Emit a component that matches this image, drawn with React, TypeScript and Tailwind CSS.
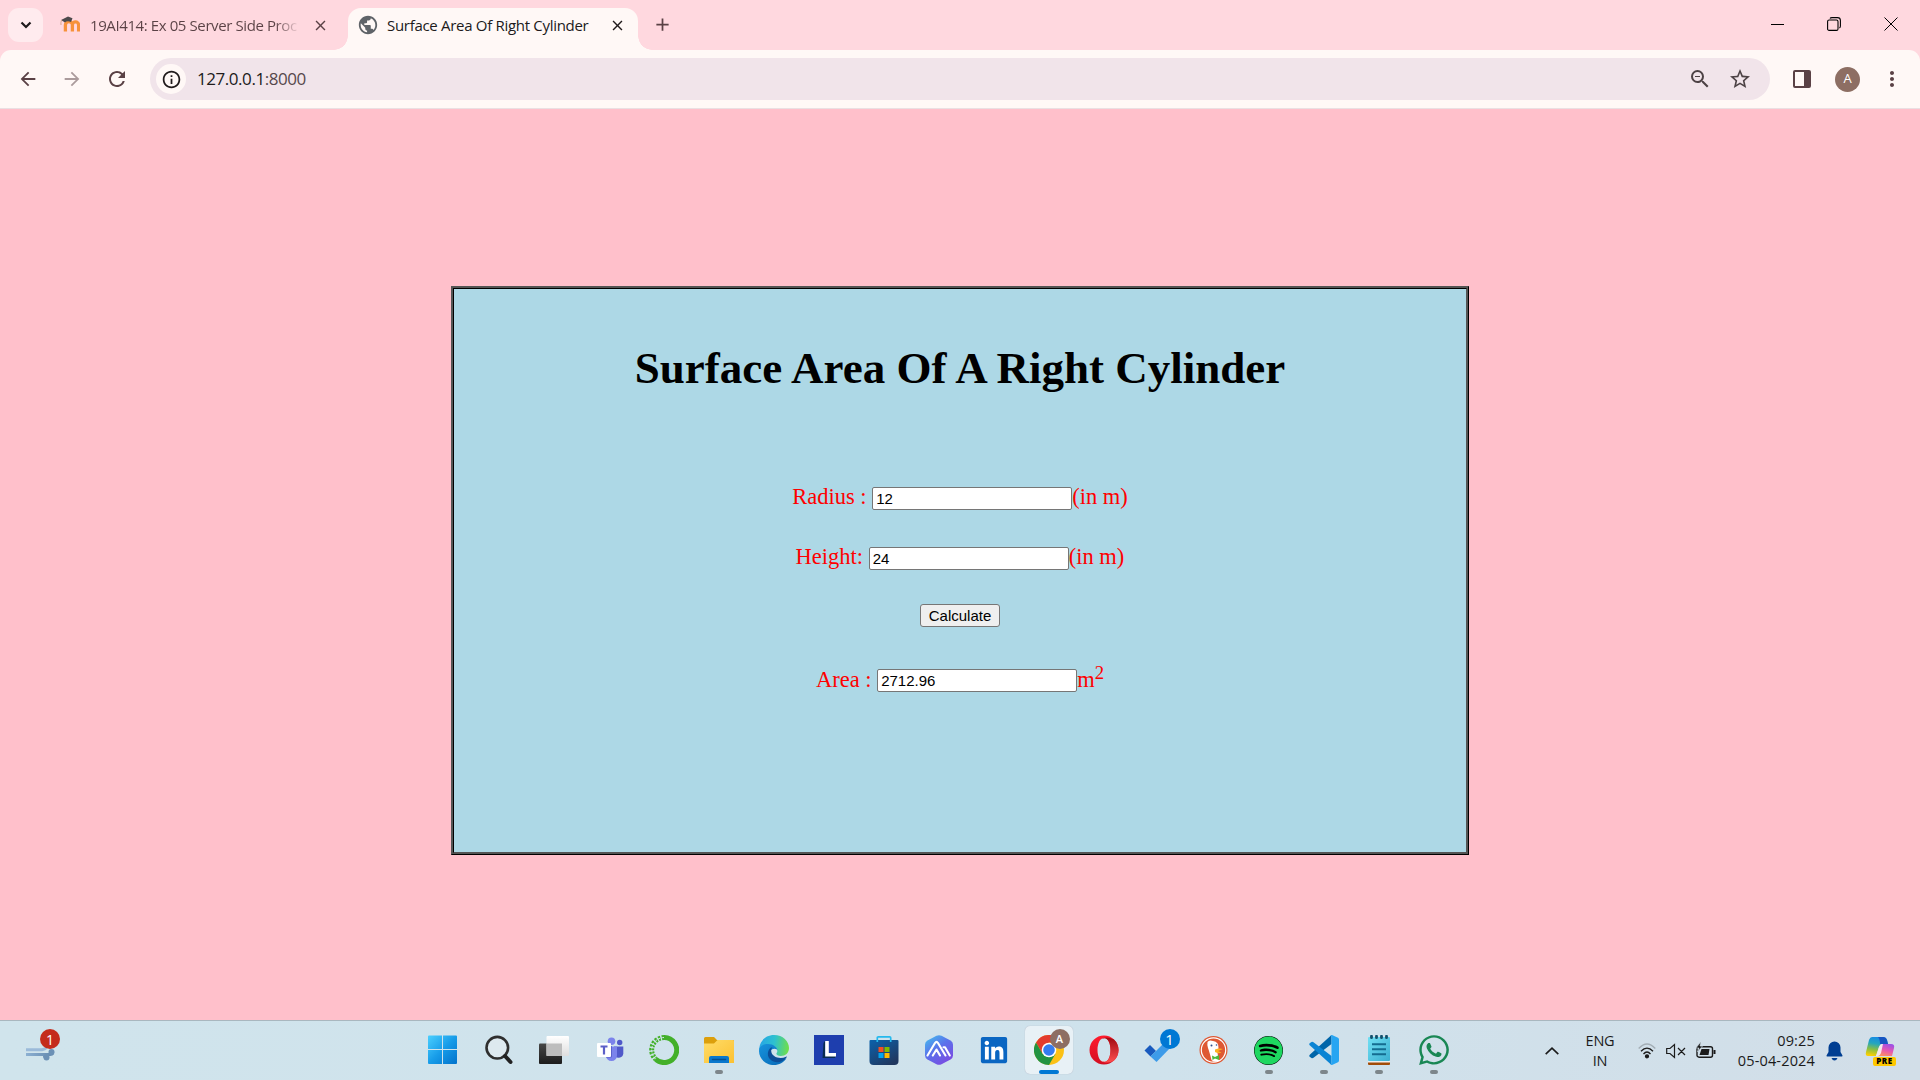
import React from "react";
import { MdArrowBack, MdArrowForward, MdRefresh, MdInfoOutline, MdZoomOut, MdStarBorder, MdMoreVert, MdClose, MdAdd, MdPublic } from "react-icons/md";
import { FaLinkedin, FaSpotify, FaWhatsapp } from "react-icons/fa";

const UI = "font-['Open_Sans','Noto_Sans',sans-serif]";

function Moodle() {
  return (
    <svg width="20" height="20" viewBox="0 0 20 20">
      <path d="M5.2 17V10.5a3.5 3.5 0 0 1 7 0V17M12.2 17V10.5a3.1 3.1 0 0 1 6.2 0V17" transform="translate(.2 -.5)" fill="none" stroke="#f7923a" strokeWidth="3.3" />
      <path d="M1 5 L8 1.500 L12.500 3.200 L11 7 Q7 5.500 5 7.500 Z" fill="#4d4a4c" />
      <path d="M1.500 5 Q.500 8 1 10" stroke="#d9a58f" fill="none" />
    </svg>
  );
}

function Windows() {
  return (
    <svg width="30" height="30" viewBox="0 0 30 30">
      <defs><linearGradient id="win" gradientUnits="userSpaceOnUse" x1="0" y1="0" x2="30" y2="30"><stop stopColor="#4bd0ff" /><stop offset=".5" stopColor="#169be8" /><stop offset="1" stopColor="#006fc9" /></linearGradient></defs>
      <path d="M1 .5H14V14H0V1.500Q0 .500 1 .500ZM15 .5H28Q29 .500 29 1.500V14H15ZM0 15H14V29H1Q0 29 0 28ZM15 15H29V28Q29 29 28 29H15Z" fill="url(#win)" />
    </svg>
  );
}

function Search() {
  return (
    <svg width="30" height="30" viewBox="0 0 30 30" fill="none">
      <circle cx="13.300" cy="12.700" r="10.800" fill="#dde9ef" stroke="#2e2e2e" strokeWidth="2.600" />
      <path d="M21 21 26.500 27" stroke="#222" strokeWidth="4" strokeLinecap="round" />
    </svg>
  );
}

function TaskView() {
  return (
    <svg width="30" height="30" viewBox="0 0 30 30">
      <defs>
        <linearGradient id="tv1" x1="0" y1="0" x2="0" y2="1"><stop stopColor="#474747" /><stop offset="1" stopColor="#1c1c1c" /></linearGradient>
        <linearGradient id="tv2" x1="0" y1="0" x2="0" y2="1"><stop stopColor="#fff" /><stop offset="1" stopColor="#dedede" /></linearGradient>
      </defs>
      <rect x="0" y="8.500" width="23" height="20.500" rx="1" fill="url(#tv1)" />
      <rect x="7.500" y="1" width="22.500" height="20" rx="1" fill="url(#tv2)" />
      <rect x="7.500" y="8.500" width="15.500" height="12.500" fill="#bdbdbd" />
    </svg>
  );
}

function Teams() {
  return (
    <svg width="30" height="30" viewBox="0 0 30 30">
      <circle cx="17.500" cy="6.300" r="3.800" fill="#7b83eb" />
      <circle cx="25.700" cy="7.500" r="2.700" fill="#5059c9" />
      <path d="M20 11.500H29.300V18.500a4.800 4.800 0 0 1-9.300 1Z" fill="#5059c9" />
      <path d="M12 11.500H23V20.500a5.300 5.300 0 0 1-11 0Z" fill="#7b83eb" />
      <path d="M12 11H18V21.500Q18 22.500 17 22.500H12Z" fill="#4b53bc" opacity=".7" />
      <rect x="3" y="8" width="14" height="14" rx="1" fill="#fff" />
      <path d="M6.500 11.500H13.500M10 11.500V19.500" stroke="#5b5fc7" strokeWidth="2.200" />
    </svg>
  );
}

function Anaconda() {
  return (
    <svg width="30" height="30" viewBox="0 0 30 30" fill="none">
      <path d="M15 2.500A12.500 12.500 0 1 1 6.500 24" stroke="#43b02a" strokeWidth="5" />
      <path d="M15 2.500A12.500 12.500 0 0 0 6.500 24" stroke="#43b02a" strokeWidth="5" strokeDasharray="2.200 1.300" />
      <path d="M15 2.500A12.500 12.500 0 0 0 6.500 24" stroke="#d0e3eb" strokeWidth="1" strokeDasharray="2.800 1" />
    </svg>
  );
}

function Folder() {
  return (
    <svg width="30" height="30" viewBox="0 0 30 30">
      <defs><linearGradient id="fo" x1="0" y1="0" x2="1" y2="1"><stop stopColor="#ffdc68" /><stop offset="1" stopColor="#fcc132" /></linearGradient></defs>
      <path d="M0 3.500Q0 2 1.500 2H10L13 5H29Q30 5 30 6V12H0Z" fill="#dc9f0c" />
      <path d="M0 8.500H10L13.500 5H29Q30 5 30 6.500V28H0Z" fill="url(#fo)" />
      <path d="M5 28V23Q5 21 7 21H23Q25 21 25 23V28Z" fill="#0a78cd" />
      <path d="M8.500 24.500H21.500" stroke="#064f91" strokeWidth="1.500" strokeLinecap="round" />
    </svg>
  );
}

function Edge() {
  return (
    <svg width="30" height="30" viewBox="0 0 30 30">
      <defs>
        <linearGradient id="ed1" x1="0" y1=".4" x2="1" y2=".5"><stop stopColor="#26a6e6" /><stop offset=".5" stopColor="#2ec1cf" /><stop offset="1" stopColor="#70df48" /></linearGradient>
        <linearGradient id="ed2" x1="0" y1="0" x2="1" y2="1"><stop stopColor="#1793dd" /><stop offset="1" stopColor="#0768b5" /></linearGradient>
      </defs>
      <path d="M.3 13C1.300 5.300 7 0 15 0c9 0 15 6.300 15 13 0 5-3.600 8-8.200 8-3.300 0-4.800-1.500-4.300-2.700 2.500-3-1-8-6.500-8C6 10.300 1.500 12 .3 17Z" fill="url(#ed1)" />
      <path d="M0 16C0 11 4.500 9 9 9c5.500 0 9.500 3.500 9.500 6.800 0-2.700-6-3-7 .5-2 7 6 11.700 16 6.700C24.800 27.700 20 30 15 30 6.500 30 0 23.500 0 16Z" fill="url(#ed2)" />
      <path d="M12 12.500c-4 3-4.500 9.500.5 13 4.500 3 11 2 15-3 .6-.7.200-1.100-.5-.8-6 3-14.500.3-14.800-5.700-.1-1.700.3-2.500 1.300-3.500Z" fill="#0c4e98" />
    </svg>
  );
}

function LApp() {
  return (
    <svg width="30" height="30" viewBox="0 0 30 30">
      <rect width="30" height="30" fill="#1e3eae" />
      <path d="M9.500 8 11 6V20L22 20.500 21 23H8.500Z" fill="#082b50" />
      <path d="M13 6V19.800H22" fill="none" stroke="#fff" strokeWidth="3.600" />
    </svg>
  );
}

function Store() {
  return (
    <svg width="30" height="30" viewBox="0 0 30 30">
      <defs><linearGradient id="st" x1="0" y1="0" x2=".7" y2="1"><stop stopColor="#0b62ac" /><stop offset="1" stopColor="#20375f" /></linearGradient></defs>
      <path d="M.5 6Q.5 5 1.500 5H28.500Q29.500 5 29.500 6V26Q29.500 30 25.500 30H4.500Q.500 30 .500 26Z" fill="url(#st)" />
      <path d="M8.300 7V2.800Q8.300 1.800 9.300 1.800H20.700Q21.700 1.800 21.700 2.800V7" fill="none" stroke="#25b9ed" strokeWidth="1.700" />
      <path fill="#f25022" d="M9.500 12h5v5h-5z" /><path fill="#7fba00" d="M15.500 12h5v5h-5z" />
      <path fill="#00a4ef" d="M9.500 18h5v5h-5z" /><path fill="#ffb900" d="M15.500 18h5v5h-5z" />
    </svg>
  );
}

function Hexagon() {
  return (
    <svg width="30" height="30" viewBox="0 0 30 30">
      <defs><linearGradient id="hx" x1="0" y1="0" x2=".7" y2="1"><stop stopColor="#43c3ee" /><stop offset=".5" stopColor="#5a72eb" /><stop offset="1" stopColor="#7a4be2" /></linearGradient></defs>
      <path d="M12.500.8Q15-.5 17.500.8L26.500 5.500Q29 7 29 9.500V20.500Q29 23 26.500 24.500L17.500 29.200Q15 30.500 12.500 29.200L3.500 24.500Q1 23 1 20.500V9.500Q1 7 3.500 5.500Z" fill="url(#hx)" />
      <path d="M3.500 20.500 11 8Q12.500 5.800 14 8L21.500 20.500M8.800 20.500 12.500 14.500 16 20.500M19.500 12.200 21 12.200 25.800 20.500" fill="none" stroke="#fff" strokeWidth="2.100" strokeLinecap="round" strokeLinejoin="round" />
    </svg>
  );
}

function ChromeLogo() {
  return (
    <svg width="30" height="30" viewBox="0 0 30 30">
      <circle cx="15" cy="15" r="15" fill="#fbc116" />
      <path d="M2 7.500A15 15 0 0 1 28 7.500H15L8.500 18.800Z" fill="#e33b2e" />
      <path d="M2 7.500A15 15 0 0 0 15 30L21.500 18.700 8.500 18.800Z" fill="#229342" />
      <circle cx="15" cy="15" r="7.300" fill="#fff" /><circle cx="15" cy="15" r="5.800" fill="#347cf0" />
    </svg>
  );
}

function Opera() {
  return (
    <svg width="30" height="30" viewBox="0 0 30 30">
      <defs>
        <linearGradient id="op" x1="0" y1="0" x2="0" y2="1"><stop stopColor="#ff1b2d" /><stop offset="1" stopColor="#d30f22" /></linearGradient>
        <linearGradient id="op2" x1="0" y1="0" x2="0" y2="1"><stop stopColor="#a00a12" /><stop offset="1" stopColor="#ff5050" /></linearGradient>
      </defs>
      <path fillRule="evenodd" fill="url(#op)" d="M15 .5a14.500 14.500 0 1 1 0 29 14.500 14.500 0 1 1 0-29M15 3c-4 0-6.500 5.500-6.500 12S11 27 15 27s6.500-5.500 6.500-12S19 3 15 3Z" />
      <path d="M10.500 5.500Q13.500 2.500 17 2.500 21 2.500 24.700 4.200A14.500 14.500 0 0 1 24.700 25.800Q21 28 17 27.500 13.500 27.500 10.500 24.500 13 26.800 16 26.800C20 26 21.500 20.500 21.500 15S20 4 16 3.200Q13 3.200 10.500 5.500Z" fill="url(#op2)" />
    </svg>
  );
}

function Todo() {
  return (
    <svg width="30" height="30" viewBox="0 0 30 30">
      <path d="M.5 15.500 6 10 12 16 6.500 21.500Z" fill="#195abe" />
      <path d="M6.500 21.500 22.500 5.500 28 11 12.500 27Z" fill="#3d9be9" />
    </svg>
  );
}

function Duck() {
  return (
    <svg width="30" height="30" viewBox="0 0 30 30">
      <circle cx="14.500" cy="15" r="14" fill="#de5833" />
      <circle cx="14.500" cy="15" r="12.200" fill="none" stroke="#fff" strokeWidth="1.200" />
      <path d="M8.500 7Q10 4.500 14 6 20 7 19.500 13L18.500 18 20 26Q15 28 12.500 25Q10.500 17 9 13Q8 9 8.500 7Z" fill="#fff" />
      <path d="M16 14.500Q20 13 24 14L19 16 22.500 17.500Q19 19 16 17Z" fill="#fdb022" />
      <path d="M13 20.500 16 22 20 20V25L16 23.500 13.500 25Z" fill="#4cba3c" /><circle cx="12.500" cy="10.500" r="1" fill="#2d4f8e" /><circle cx="17.500" cy="10" r=".8" fill="#2d4f8e" />
    </svg>
  );
}

function VSCode() {
  return (
    <svg width="30" height="30" viewBox="0 0 30 30">
      <path d="M22.500 0 1 19.500Q-.5 21 1 22L2.500 23Q3.500 23.500 4.500 22.700L22.500 9Z" fill="#0065a9" />
      <path d="M22.500 30 1 10.500Q-.5 9 1 8L2.500 7Q3.500 6.500 4.500 7.300L22.500 21Z" fill="#0b84d4" />
      <path d="M21.500.5 23 0 29 2.800Q30 3.300 30 4.500V25.500Q30 26.700 29 27.200L23 30 21.500 29.500Q22.500 29 22.500 27.500V2.500Q22.500 1 21.500.5Z" fill="#27a5f2" />
    </svg>
  );
}

function Notepad() {
  return (
    <svg width="30" height="30" viewBox="0 0 30 30">
      <defs><linearGradient id="np" x1="0" y1="0" x2="1" y2="1"><stop stopColor="#72e0f4" /><stop offset="1" stopColor="#3aaed0" /></linearGradient></defs>
      <path d="M4 25H26V29Q26 30 25 30H5Q4 30 4 29Z" fill="#a14c08" /><path d="M4 24H26V27.500H4Z" fill="#eee" />
      <rect x="4" y="2" width="22" height="24" rx="1" fill="url(#np)" />
      <path d="M7.500 1.200V2.700M12.500 1.200V2.700M17.500 1.200V2.700M22.500 1.200V2.700" stroke="#124f6b" strokeWidth="2.800" strokeLinecap="round" />
      <path d="M8 9.300H22M8 14.300H22M8 19.300H22" stroke="#146c90" strokeWidth="2" />
    </svg>
  );
}

function Wind() {
  return (
    <svg width="30" height="28" viewBox="0 0 30 28">
      <defs><linearGradient id="wd" gradientUnits="userSpaceOnUse" x1="0" y1="0" x2="28" y2="0"><stop stopColor="#8cb0d2" /><stop offset="1" stopColor="#6388ad" /></linearGradient></defs>
      <path d="M0 14.800H16Q22 14 20 9" fill="none" stroke="#9bbad9" strokeWidth="3" />
      <path d="M0 19.500H24Q28 19 26 16M17 21Q22 21 20 24" fill="none" stroke="url(#wd)" strokeWidth="3.200" />
      <circle cx="25.500" cy="17" r="3" fill="#6c91b6" /><circle cx="20.500" cy="22.500" r="3" fill="#6c91b6" />
    </svg>
  );
}

function Copilot() {
  return (
    <svg width="30" height="30" viewBox="0 0 30 30">
      <defs>
        <linearGradient id="cp1" x1=".5" y1="0" x2=".3" y2="1"><stop stopColor="#178be4" /><stop offset=".35" stopColor="#25a6bd" /><stop offset=".65" stopColor="#86be46" /><stop offset="1" stopColor="#ffd000" /></linearGradient>
        <linearGradient id="cp2" x1=".7" y1="0" x2=".3" y2="1"><stop stopColor="#9d50e6" /><stop offset=".5" stopColor="#e657b1" /><stop offset="1" stopColor="#ff945c" /></linearGradient>
      </defs>
      <path d="M7 1H18Q21 1 22 4L23 8H17Q15 8 14 11L11 20H3Q0 20 1 16L4 4Q5 1 7 1Z" fill="url(#cp1)" />
      <path d="M13 1H18Q21 1 22 4L23 8H15Q15 3 13 1Z" fill="#1855c1" />
      <path d="M17 8H26Q30 8 29 12L27 20H11Q14 20 15 17Z" fill="url(#cp2)" />
      <path d="M17 8Q15 8 14 11L11 20H13Q15 20 16 17L18 8Z" fill="#f6e7ec" />
    </svg>
  );
}

function Bubble({ className, children }: { className: string; children: React.ReactNode }) {
  return <span className={`absolute flex size-5 items-center justify-center rounded-full text-white ${className}`}>{children}</span>;
}

type Item = { icon: React.ReactNode; running?: boolean; active?: boolean; overlay?: React.ReactNode };
const items: Item[] = [
  { icon: <span className="-ml-px"><Windows /></span> },
  { icon: <Search /> },
  { icon: <TaskView /> },
  { icon: <Teams /> },
  { icon: <Anaconda /> },
  { icon: <Folder />, running: true },
  { icon: <Edge /> },
  { icon: <LApp /> },
  { icon: <Store /> },
  { icon: <Hexagon /> },
  { icon: <span className="relative flex"><span className="absolute inset-1 bg-white" /><FaLinkedin size={30} className="relative text-[#0a66c2]" /></span> },
  { icon: <ChromeLogo />, active: true, overlay: <Bubble className="left-[25px] top-[3px] bg-[#8d6e63] text-[11px] font-semibold">A</Bubble> },
  { icon: <Opera /> },
  { icon: <Todo />, overlay: <Bubble className="left-[25px] top-[3px] bg-[#0078d4] text-[15px]">1</Bubble> },
  { icon: <Duck /> },
  { icon: <span className="rounded-full bg-black"><FaSpotify size={29} className="text-[#1ed760]" /></span>, running: true },
  { icon: <VSCode />, running: true },
  { icon: <Notepad />, running: true },
  { icon: <FaWhatsapp size={34} className="text-[#198754]" />, running: true },
];

function BrowserHeader() {
  return (
    <header className={`h-[109px] shrink-0 bg-[#ffd8df] ${UI}`}>
      <div className="flex h-[50px] items-start">
        <button className="ml-2 mt-2 flex h-[34px] w-[35px] items-center justify-center rounded-[11px] bg-[#ffebee] text-[#1f1a1b]">
          <svg width="12" height="8" viewBox="0 0 12 8" fill="none" stroke="currentColor" strokeWidth="2.200"><path d="m1.500 1.500 4.500 4.500 4.500-4.500" /></svg>
        </button>
        <div className="ml-[17px] mt-2 flex h-[34px] w-[288px] items-center">
          <Moodle />
          <span className="ml-[10px] w-[210px] whitespace-nowrap bg-[linear-gradient(to_right,#5a4145_88%,#ffd8df)] bg-clip-text text-[15px] tracking-[-0.4px] text-transparent">19AI414: Ex 05 Server Side Proc</span>
          <MdClose size={17} className="ml-[12px] text-[#5a4145]" />
        </div>
        <div className="relative mt-2 flex h-[42px] w-[290px] items-start rounded-t-[13px] bg-[#fff8f6] before:absolute before:-left-[14px] before:bottom-0 before:size-[14px] before:bg-[radial-gradient(circle_at_0_0,transparent_13.500px,#fff8f6_14px)] after:absolute after:-right-[14px] after:bottom-0 after:size-[14px] after:bg-[radial-gradient(circle_at_100%_0,transparent_13.500px,#fff8f6_14px)]">
          <div className="flex h-[34px] items-center pl-[9px]">
            <MdPublic size={22} className="text-[#5f6368]" />
            <span className="ml-[8px] w-[202px] whitespace-nowrap text-[15px] tracking-[-0.3px] text-[#201a1b]">Surface Area Of Right Cylinder</span>
            <MdClose size={17} className="ml-[20px] text-[#201a1b]" />
          </div>
        </div>
        <MdAdd size={21} className="ml-[14px] mt-[14px] text-[#5a4145]" />
        <div className="ml-auto mr-[22px] mt-[17px] flex items-center gap-[43px] text-black">
          <svg width="13" height="14" viewBox="0 0 13 14"><path d="M0 7.500H13" stroke="currentColor" /></svg>
          <svg width="14" height="14" viewBox="0 0 14 14" fill="none" stroke="currentColor" strokeWidth="1.100"><rect x=".6" y="3" width="10.400" height="10.400" rx="1.500" /><path d="M3 1.600Q3.500.600 5 .600H10.500Q13.400.600 13.400 3.500V9Q13.400 10.500 12.400 11" /></svg>
          <svg width="14" height="14" viewBox="0 0 14 14" stroke="currentColor"><path d="M.5.5 13.500 13.500M13.500.500.500 13.500" /></svg>
        </div>
      </div>
      <div className="flex h-[59px] items-center rounded-t-[11px] border-b border-[#eadfe2] bg-[#fff8f6] text-[#5a4145]">
        <MdArrowBack size={22} className="ml-[17px]" />
        <MdArrowForward size={22} className="ml-[22px] opacity-50" />
        <MdRefresh size={24} className="ml-[22px]" />
        <div className="ml-[21px] flex h-[42px] w-[1620px] items-center rounded-full bg-[#f1e4ea]">
          <span className="ml-[6px] flex size-[30px] items-center justify-center rounded-full bg-[#fff8f6] text-[#201a1b]"><MdInfoOutline size={21} /></span>
          <span className="ml-[11px] text-[17px] tracking-[-0.45px] text-[#201a1b]">127.0.0.1<span className="text-[#57484c]">:8000</span></span>
          <MdZoomOut size={24} className="ml-auto text-[#4d4245]" />
          <MdStarBorder size={24} className="ml-[16px] mr-[18px] text-[#4d4245]" />
        </div>
        <svg className="ml-[23px]" width="18" height="18" viewBox="0 0 18 18"><rect x="1" y="1" width="16" height="16" rx="1" fill="none" stroke="currentColor" strokeWidth="2" /><path d="M11 1h6v16h-6z" fill="currentColor" /></svg>
        <span className="ml-[24px] flex size-[25px] items-center justify-center rounded-full bg-[#8d6e63] text-[13px] text-white">A</span>
        <MdMoreVert size={24} className="ml-[20px]" />
      </div>
    </header>
  );
}

const field = "h-[23px] w-[200px] rounded-[2px] border border-[#767676] bg-white px-[3px] font-['Liberation_Sans',sans-serif] text-[15px] leading-[20px] text-black outline-none";

export default function App() {
  return (
    <div className="flex h-[1080px] w-[1920px] flex-col overflow-hidden bg-[#ffc0cb]">
      <BrowserHeader />
      <main className="flex flex-1 justify-center pt-[177px] font-['Liberation_Serif',serif]">
        <section className="flex h-[569px] w-[1018px] flex-col items-center border-[3px] border-black bg-[#add8e6] [border-style:ridge]">
          <h1 className="mt-[53px] whitespace-nowrap text-[45px] font-bold leading-[52px] text-black">Surface Area Of A Right Cylinder</h1>
          <form className="mt-[91px] flex flex-col items-center text-[22.5px] leading-[23px] text-[#ff0000]">
            <div className="flex h-[25px] items-start whitespace-pre"><label>Radius : </label><input className={`mt-[2px] ${field}`} defaultValue="12" /><span>(in m)</span></div>
            <div className="mt-[35px] flex h-[25px] items-start whitespace-pre"><label>Height: </label><input className={`mt-[2px] ${field}`} defaultValue="24" /><span>(in m)</span></div>
            <button type="button" className="mt-[34px] h-[23px] w-[80px] rounded-[3px] border border-[#767676] bg-[#efefef] font-['Liberation_Sans',sans-serif] text-[15px] leading-[21px] text-black">Calculate</button>
            <div className="mt-[41px] flex h-[25px] items-start whitespace-pre"><label>Area : </label><input className={`mt-[1px] ${field}`} defaultValue="2712.96" /><span>m<sup className="-top-[0.45em] text-[18.750px] leading-[0]">2</sup></span></div>
          </form>
        </section>
      </main>
      <footer className={`flex h-[60px] shrink-0 border-t border-[#a9b7bf] bg-[linear-gradient(to_right,#d0e4ec,#cfe2ec_60%,#d2dee8)] text-[#1b1b1b] ${UI}`}>
        <div className="flex w-[416px] pl-[26px] pt-[7px]">
          <div className="relative h-[44px] w-[40px] pt-[7px]"><Wind /><Bubble className="left-[14px] top-[1px] bg-[#c42b1c] text-[14px]">1</Bubble></div>
        </div>
        <nav className="flex">
          {items.map((it, i) => (
            <div key={i} className="flex w-[55px] justify-center pt-[5px]">
              <div className={it.active ? "relative flex size-12 items-center justify-center rounded-[5px] bg-[#e8f1f6] shadow-[0_0_1px_#aab]" : "relative flex size-12 items-center justify-center"}>
                {it.icon}
                {it.overlay}
                {it.active && <span className="absolute bottom-0 left-[14px] h-1 w-5 rounded-full bg-[#0078d4]" />}
                {it.running && <span className="absolute bottom-0 left-5 h-1 w-2 rounded-full bg-[#7d868b]" />}
              </div>
            </div>
          ))}
        </nav>
        <div className="ml-auto flex items-center text-[14.500px] leading-[20px]">
          <svg width="14" height="8" viewBox="0 0 14 8" fill="none" stroke="currentColor" strokeWidth="1.600"><path d="m.7 7.200 6.300-6 6.300 6" /></svg>
          <div className="ml-[22px] w-[38px] text-center tracking-[-0.2px]">ENG<br />IN</div>
          <svg className="ml-[19px]" width="18" height="16" viewBox="0 0 18 16" fill="none" stroke="currentColor" strokeWidth="1.300"><path d="M.7 5.500Q9-3.500 17.300 5.500" opacity=".25" /><path d="M3 8.300Q9 2 15 8.300M5.500 11Q9 7 12.500 11" /><circle cx="9" cy="13.300" r="1.500" fill="currentColor" /></svg>
          <svg className="ml-[10px]" width="20" height="16" viewBox="0 0 20 16" fill="none" stroke="currentColor" strokeWidth="1.200"><path d="M.7 5.500H4L8.500 1.500V14.500L4 10.500H.7ZM12 5l7 7M19 5l-7 7" /></svg>
          <svg className="ml-[10px]" width="20" height="17" viewBox="0 0 20 17"><rect x="1" y="4.700" width="15.500" height="10.500" rx="2" fill="none" stroke="currentColor" strokeWidth="1.400" /><path d="M3.500 13 5.500 7H13.500L12.500 13ZM17.500 8h2v4h-2z" fill="currentColor" /><path d="M5-.5 0 6H3L1.500 10 6.500 4H4Z" fill="currentColor" stroke="#d1dfe9" strokeWidth=".6" /></svg>
          <div className="ml-[19px] w-[80px] whitespace-nowrap text-right tracking-[0.16px]">09:25<br />05-04-2024</div>
          <svg className="ml-[11px]" width="17" height="20" viewBox="0 0 17 20" fill="#003e92"><path d="M8.500.5A6 6 0 0 1 14.500 6.500V11L16.500 14.500Q16.500 15.500 16 15.500H1Q.500 15.500.500 14.500L2.500 11V6.500A6 6 0 0 1 8.500.500ZM5.500 17H11.500Q10.500 19.500 8.500 19.500T5.500 17Z" /></svg>
          <div className="relative ml-[22px] mr-[25px] h-[30px] w-[30px]"><Copilot /><span className="absolute -right-[1px] bottom-0 flex h-[9px] w-[23px] items-center justify-center rounded-[2px] bg-[#ffc800] text-[8px] font-extrabold tracking-[.5px] text-black">PRE</span></div>
        </div>
      </footer>
    </div>
  );
}
